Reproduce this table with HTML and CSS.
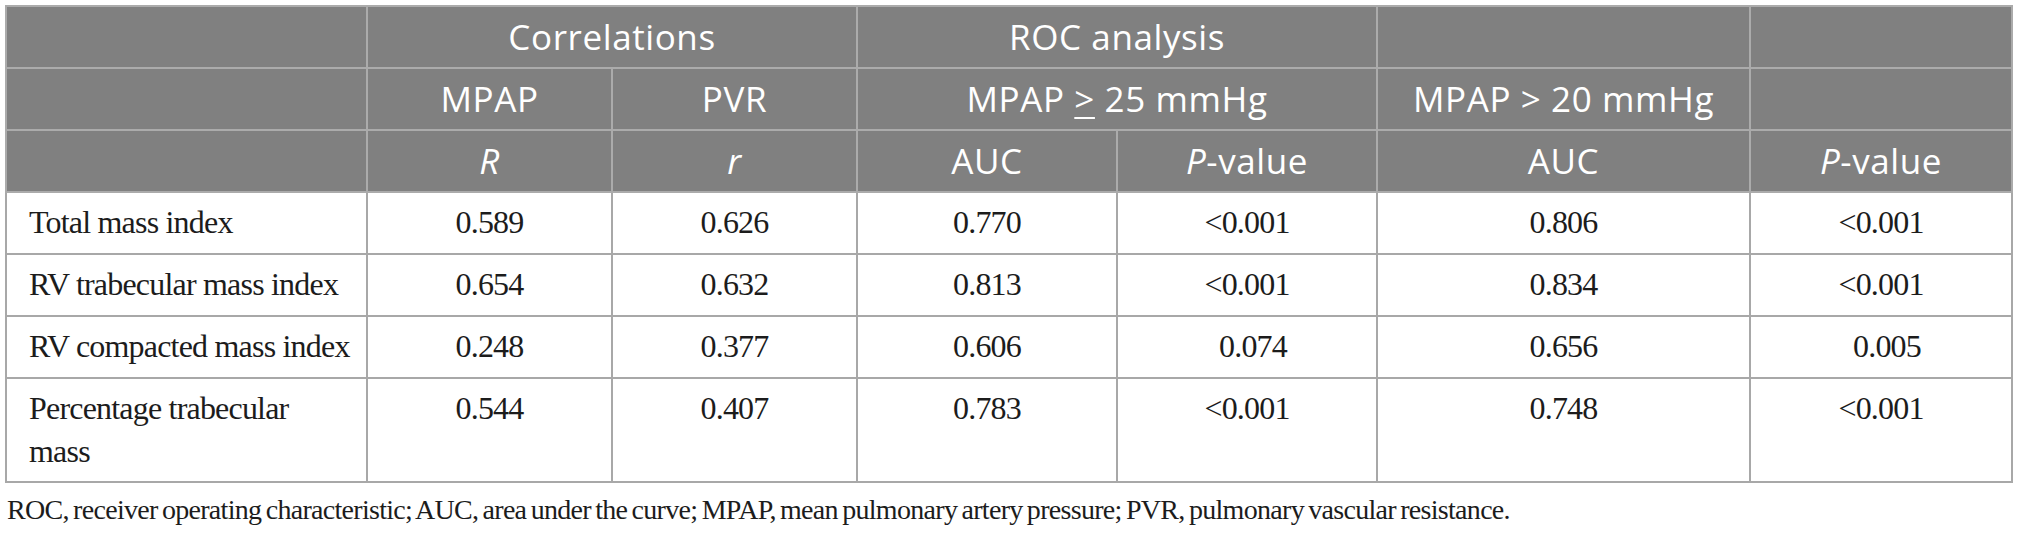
FILE: index.html
```html
<!DOCTYPE html>
<html lang="en">
<head>
<meta charset="utf-8">
<title>Table</title>
<link rel="stylesheet" href="styles.css">
</head>
<body>
<div class="page">
  <table class="data-table">
    <colgroup>
      <col class="c-label">
      <col class="c-mpap">
      <col class="c-pvr">
      <col class="c-auc1">
      <col class="c-p1">
      <col class="c-auc2">
      <col class="c-p2">
    </colgroup>
    <thead>
      <tr>
        <th></th>
        <th colspan="2">Correlations</th>
        <th colspan="2">ROC analysis</th>
        <th></th>
        <th></th>
      </tr>
      <tr>
        <th></th>
        <th>MPAP</th>
        <th>PVR</th>
        <th colspan="2">MPAP <u>&gt;</u> 25 mmHg</th>
        <th>MPAP &gt; 20 mmHg</th>
        <th></th>
      </tr>
      <tr>
        <th></th>
        <th><i>R</i></th>
        <th><i>r</i></th>
        <th>AUC</th>
        <th><i>P</i>-value</th>
        <th>AUC</th>
        <th><i>P</i>-value</th>
      </tr>
    </thead>
    <tbody>
      <tr>
        <td class="label">Total mass index</td>
        <td>0.589</td>
        <td>0.626</td>
        <td>0.770</td>
        <td>&lt;0.001</td>
        <td>0.806</td>
        <td>&lt;0.001</td>
      </tr>
      <tr>
        <td class="label">RV trabecular mass index</td>
        <td>0.654</td>
        <td>0.632</td>
        <td>0.813</td>
        <td>&lt;0.001</td>
        <td>0.834</td>
        <td>&lt;0.001</td>
      </tr>
      <tr>
        <td class="label">RV compacted mass index</td>
        <td>0.248</td>
        <td>0.377</td>
        <td>0.606</td>
        <td class="pad">0.074</td>
        <td>0.656</td>
        <td class="pad">0.005</td>
      </tr>
      <tr class="tall">
        <td class="label">Percentage trabecular<br>mass</td>
        <td>0.544</td>
        <td>0.407</td>
        <td>0.783</td>
        <td>&lt;0.001</td>
        <td>0.748</td>
        <td>&lt;0.001</td>
      </tr>
    </tbody>
  </table>
  <p class="footnote">ROC, receiver operating characteristic; AUC, area under the curve; MPAP, mean pulmonary artery pressure; PVR, pulmonary vascular resistance.</p>
</div>
</body>
</html>
```

FILE: styles.css
```css
html, body {
  margin: 0;
  padding: 0;
  background: #ffffff;
}

.page {
  padding: 5px 0 0 5px;
}

.data-table {
  border-collapse: collapse;
  table-layout: fixed;
  width: 2006px;
}

.c-label { width: 361px; }
.c-mpap { width: 245px; }
.c-pvr { width: 245px; }
.c-auc1 { width: 260px; }
.c-p1 { width: 260px; }
.c-auc2 { width: 373px; }
.c-p2 { width: 262px; }

.data-table th {
  background: #808080;
  color: #ffffff;
  font-family: "Open Sans", "Noto Sans", sans-serif;
  font-weight: 400;
  font-size: 35px;
  letter-spacing: 0.6px;
  line-height: 42px;
  height: 62px;
  box-sizing: border-box;
  padding: 9px 8px;
  text-align: center;
  vertical-align: middle;
  border: 2px solid #ababab;
}

.data-table th u {
  text-decoration-thickness: 2px;
  text-underline-offset: 5px;
}

.data-table td {
  font-family: "Liberation Serif", "Times New Roman", serif;
  font-size: 32px;
  letter-spacing: -0.8px;
  color: #1c1c1c;
  line-height: 43px;
  height: 62px;
  box-sizing: border-box;
  padding: 8px 10px;
  text-align: center;
  vertical-align: top;
  border: 2px solid #a8a8a8;
}

.data-table td.label {
  text-align: left;
  padding-left: 22px;
}

.data-table td.pad {
  padding-left: 22px;
}

.data-table tr.tall td {
  height: 104px;
}

.footnote {
  margin: 9px 0 0 2px;
  font-family: "Liberation Serif", "Times New Roman", serif;
  font-size: 28px;
  letter-spacing: -0.7px;
  word-spacing: -2px;
  line-height: 36px;
  color: #1c1c1c;
}
```
